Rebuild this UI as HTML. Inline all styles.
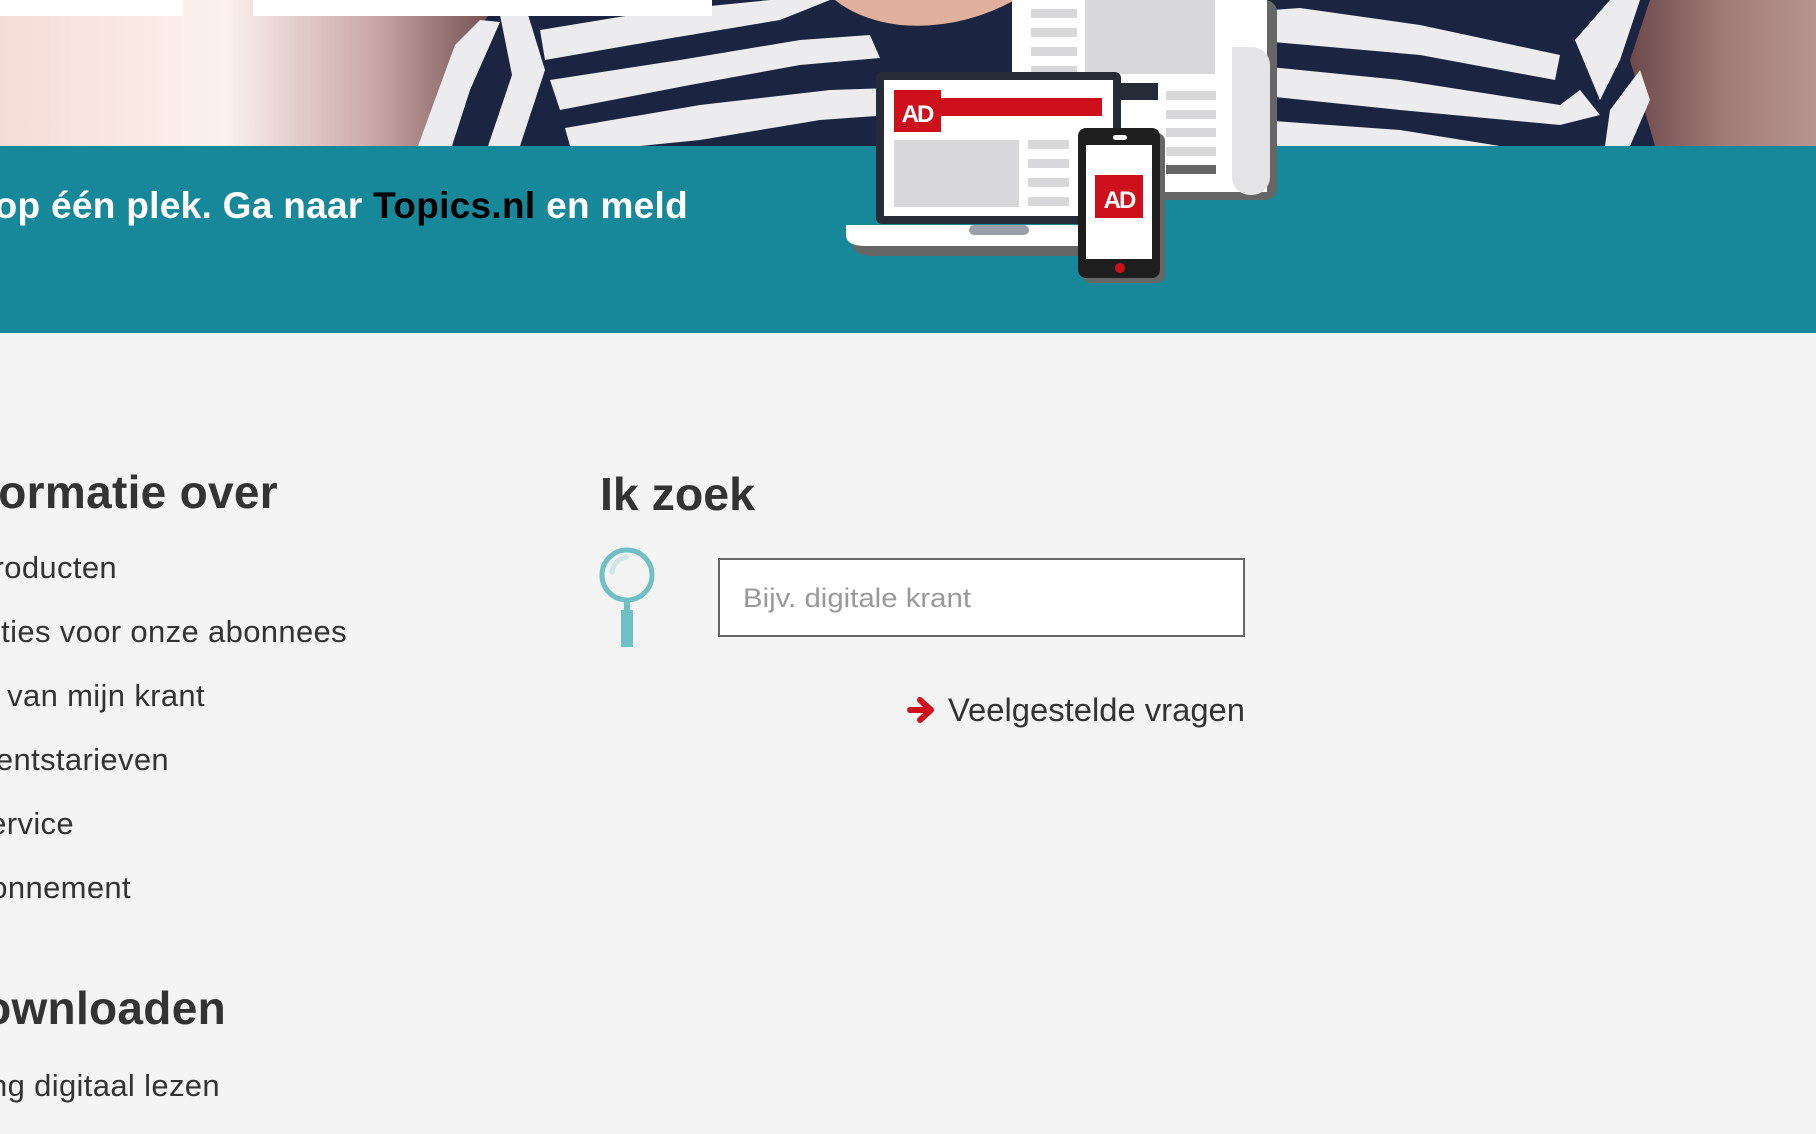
<!DOCTYPE html>
<html><head><meta charset="utf-8"><style>
html,body{margin:0;padding:0;background:#f4f4f4;overflow:hidden}
svg{display:block}
text{font-family:"Liberation Sans",sans-serif}
</style></head><body>
<svg width="1816" height="1134" viewBox="0 0 1816 1134" xmlns="http://www.w3.org/2000/svg">
<defs>
<linearGradient id="skin" x1="0" x2="1" y1="0" y2="0">
<stop offset="0" stop-color="#f6dcd6"/>
<stop offset="0.45" stop-color="#fbf1ee"/>
<stop offset="0.75" stop-color="#c9a7a6"/>
<stop offset="1" stop-color="#6e4a4c"/>
</linearGradient>
<linearGradient id="skin2" x1="0" x2="1" y1="0" y2="0">
<stop offset="0" stop-color="#6e4a4c"/>
<stop offset="0.5" stop-color="#a07a76"/>
<stop offset="1" stop-color="#b89590"/>
</linearGradient>
</defs>
<rect width="1816" height="1134" fill="#f4f4f4"/>
<rect x="0" y="0" width="1816" height="146" fill="#1b2440"/>
<path d="M0 0 H500 L470 40 L420 146 H0Z" fill="url(#skin)"/>
<path d="M1650 0 H1816 V146 H1655 L1630 60Z" fill="url(#skin2)"/>
<path d="M835 0 H1015 Q960 30 900 25 Q860 20 835 0Z" fill="#e0b09c"/>
<g fill="#ececee">
<polygon points="418,146 455,45 480,20 500,22 470,90 452,146"/>
<polygon points="500,15 525,5 545,70 520,146 488,146 512,75"/>
<polygon points="540,30 650,12 770,0 830,0 780,20 660,40 545,60"/>
<polygon points="550,80 680,60 800,40 870,35 880,58 800,65 690,85 560,110"/>
<polygon points="565,128 700,105 830,90 890,88 890,115 820,120 700,140 640,146 570,146"/>
<polygon points="1245,12 1300,8 1420,25 1560,55 1555,80 1420,55 1250,40"/>
<polygon points="1250,65 1400,80 1560,105 1580,90 1600,115 1560,125 1400,110 1255,95"/>
<polygon points="1260,120 1400,130 1500,146 1270,146"/>
<polygon points="1575,40 1610,0 1640,0 1620,60 1600,100"/>
<polygon points="1610,110 1640,70 1650,100 1630,146 1605,146"/>
</g>
<rect x="0" y="0" width="183" height="16" fill="#fff"/>
<rect x="253" y="0" width="459" height="16" fill="#fff"/>
<rect x="0" y="146" width="1816" height="187" fill="#16889a"/>
<text x="688" y="218" text-anchor="end" font-size="37" font-weight="bold" fill="#fff" letter-spacing="0.3">Al het nieuws verzameld op één plek. Ga naar <tspan fill="#000">Topics.nl</tspan> en meld</text>
<rect x="1020" y="0" width="257" height="200" rx="12" fill="#666"/>
<rect x="1012" y="0" width="255" height="192" fill="#fff"/>
<rect x="1232" y="47" width="38" height="148" rx="18" fill="#e4e4e6"/>
<rect x="1232" y="47" width="20" height="108" fill="#e4e4e6"/>
<g fill="#d8d8da">
<rect x="1031" y="9" width="46" height="9"/><rect x="1031" y="28" width="46" height="9"/><rect x="1031" y="47" width="46" height="9"/><rect x="1031" y="66" width="46" height="9"/>
<rect x="1085" y="0" width="130" height="74"/>
<rect x="1166" y="91" width="50" height="9"/><rect x="1166" y="110" width="50" height="9"/><rect x="1166" y="128" width="50" height="9"/><rect x="1166" y="147" width="50" height="9"/>
</g>
<rect x="1166" y="165" width="50" height="9" fill="#666"/>
<rect x="1120" y="83" width="38" height="17" fill="#252b37"/>
<rect x="876" y="72" width="245" height="152" rx="6" fill="#252b37"/>
<rect x="884" y="80" width="229" height="136" fill="#fff"/>
<rect x="894" y="90" width="47" height="42" fill="#cd101b"/>
<rect x="941" y="98" width="161" height="18" fill="#cd101b"/>
<text x="917" y="122" text-anchor="middle" font-size="24" font-weight="bold" fill="#fff" letter-spacing="-2">AD</text>
<rect x="894" y="140" width="125" height="67" fill="#d8d8da"/>
<g fill="#d8d8da"><rect x="1028" y="140" width="41" height="9"/><rect x="1028" y="159" width="41" height="9"/><rect x="1028" y="178" width="41" height="9"/><rect x="1028" y="197" width="41" height="9"/></g>
<path d="M846 225 H1120 V251 H866 Q846 251 846 235Z" fill="#666" transform="translate(6,5)"/>
<path d="M846 225 H1120 V246 H866 Q846 246 846 235Z" fill="#fff"/>
<rect x="969" y="225" width="60" height="10" rx="5" fill="#9a9ea6"/>
<rect x="1083" y="133" width="82" height="150" rx="8" fill="#666"/>
<rect x="1078" y="128" width="82" height="150" rx="8" fill="#1e1e1e"/>
<rect x="1086" y="145" width="66" height="114" fill="#fff"/>
<rect x="1113" y="135" width="14" height="5" rx="2.5" fill="#fff"/>
<circle cx="1120" cy="268" r="5" fill="#cd101b"/>
<rect x="1095" y="175" width="48" height="43" fill="#cd101b"/>
<text x="1119" y="208" text-anchor="middle" font-size="24" font-weight="bold" fill="#fff" letter-spacing="-2">AD</text>
<g fill="#333">
<text x="278" y="508" text-anchor="end" font-size="46" font-weight="bold" letter-spacing="0.3">Informatie over</text>
<text x="117" y="578" text-anchor="end" font-size="31" letter-spacing="0.35">Producten</text>
<text x="347" y="642" text-anchor="end" font-size="31" letter-spacing="0.35">Acties voor onze abonnees</text>
<text x="205" y="706" text-anchor="end" font-size="31" letter-spacing="0.35">Bezorging van mijn krant</text>
<text x="169" y="770" text-anchor="end" font-size="31" letter-spacing="0.35">Abonnementstarieven</text>
<text x="74" y="834" text-anchor="end" font-size="31" letter-spacing="0.35">Klantenservice</text>
<text x="131" y="898" text-anchor="end" font-size="31" letter-spacing="0.35">Mijn abonnement</text>
<text x="226" y="1024" text-anchor="end" font-size="46" font-weight="bold" letter-spacing="0.3">Downloaden</text>
<text x="220" y="1096" text-anchor="end" font-size="31" letter-spacing="0.35">Ontvang digitaal lezen</text>
<text x="600" y="510" font-size="46" font-weight="bold" textLength="155" lengthAdjust="spacingAndGlyphs">Ik zoek</text>
</g>
<circle cx="627" cy="575" r="25" fill="none" stroke="#6fbfc6" stroke-width="5"/>
<path d="M612 572 Q614 560 626 557" fill="none" stroke="#cfe6e8" stroke-width="5" stroke-linecap="round"/>
<rect x="624" y="600" width="6" height="12" fill="#6fbfc6"/>
<rect x="621" y="610" width="12" height="37" fill="#6fbfc6"/>
<rect x="719" y="559" width="525" height="77" fill="#fff" stroke="#666" stroke-width="2"/>
<text x="743" y="607" font-size="27" fill="#999" textLength="228" lengthAdjust="spacingAndGlyphs">Bijv. digitale krant</text>
<path d="M910 710 H929 M920 700 L931 710 L920 720" fill="none" stroke="#cd101b" stroke-width="6" stroke-linecap="round" stroke-linejoin="round"/>
<text x="948" y="721" font-size="32" fill="#333" textLength="297" lengthAdjust="spacingAndGlyphs">Veelgestelde vragen</text>
</svg>
</body></html>
